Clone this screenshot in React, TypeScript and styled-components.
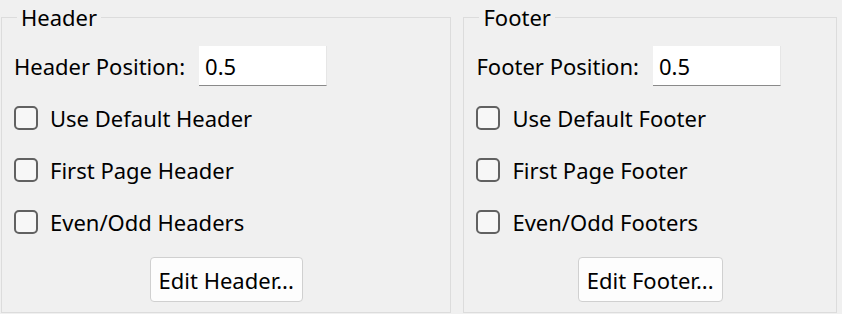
import React from "react";
import styled, { createGlobalStyle } from "styled-components";

const GlobalStyle = createGlobalStyle`
  html, body {
    margin: 0;
    padding: 0;
    background: #f0f0f0;
  }
  body {
    font-family: "Noto Sans", "Open Sans", sans-serif;
    color: #000;
  }
`;

const Page = styled.div`
  display: flex;
  gap: 12px;
  padding: 1px 5px 0 1px;
  height: 313px;
  box-sizing: border-box;
`;

const Group = styled.fieldset<{ $width: number }>`
  width: ${({ $width }) => $width}px;
  box-sizing: border-box;
  margin: 0;
  padding: 12px 12px 10px 12px;
  border: 1px solid #dcdcdc;
  display: flex;
  flex-direction: column;
  min-width: 0;
`;

const Title = styled.legend`
  margin-left: 3px;
  padding: 0 4px;
  font-size: 22px;
  line-height: 33px;
`;

const FieldRow = styled.div`
  display: flex;
  align-items: center;
  gap: 14px;
  height: 40px;
  font-size: 22px;
`;

const Input = styled.input`
  width: 128px;
  height: 40px;
  box-sizing: border-box;
  border: none;
  border-bottom: 1px solid #8a8a8a;
  border-right: 1px solid #e6e6e6;
  background: #fff;
  padding: 0 6px;
  font-family: inherit;
  font-size: 22px;
  color: #000;
  outline: none;
`;

const CheckRow = styled.label`
  display: flex;
  align-items: center;
  gap: 12px;
  height: 52px;
  font-size: 22px;
  &:first-of-type {
    margin-top: 6px;
  }
`;

const Box = styled.span`
  width: 24px;
  height: 24px;
  box-sizing: border-box;
  border: 2px solid #616161;
  border-radius: 5px;
  background: #f7f7f7;
  flex-shrink: 0;
`;

const ButtonRow = styled.div`
  display: flex;
  justify-content: center;
  margin-top: 9px;
`;

const Button = styled.button`
  height: 45px;
  padding: 0 8px;
  box-sizing: border-box;
  background: #fdfdfd;
  border: 1px solid #d0d0d0;
  border-radius: 4px;
  font-family: inherit;
  font-size: 22px;
  color: #000;
`;

type Props = {
  name: string;
  width: number;
};

const PositionGroup = ({ name, width }: Props) => (
  <Group $width={width}>
    <Title>{name}</Title>
    <FieldRow>
      <span>{name} Position:</span>
      <Input defaultValue="0.5" />
    </FieldRow>
    <CheckRow>
      <Box />
      Use Default {name}
    </CheckRow>
    <CheckRow>
      <Box />
      First Page {name}
    </CheckRow>
    <CheckRow>
      <Box />
      Even/Odd {name}s
    </CheckRow>
    <ButtonRow>
      <Button type="button">Edit {name}...</Button>
    </ButtonRow>
  </Group>
);

const App = () => (
  <>
    <GlobalStyle />
    <Page>
      <PositionGroup name="Header" width={451} />
      <PositionGroup name="Footer" width={374} />
    </Page>
  </>
);

export default App;
